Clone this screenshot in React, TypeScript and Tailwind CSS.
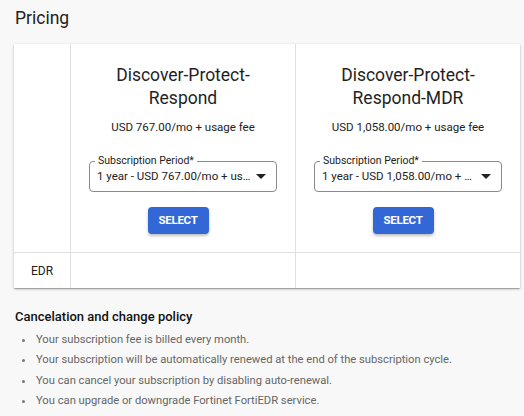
type Plan = {
  name: string;
  price: string;
  period: string;
};

const plans: Plan[] = [
  {
    name: "Discover-Protect-Respond",
    price: "USD 767.00/mo + usage fee",
    period: "1 year - USD 767.00/mo + usage fee",
  },
  {
    name: "Discover-Protect-Respond-MDR",
    price: "USD 1,058.00/mo + usage fee",
    period: "1 year - USD 1,058.00/mo + usage fee",
  },
];

const policy = [
  "Your subscription fee is billed every month.",
  "Your subscription will be automatically renewed at the end of the subscription cycle.",
  "You can cancel your subscription by disabling auto-renewal.",
  "You can upgrade or downgrade Fortinet FortiEDR service.",
];

const PeriodSelect = ({ value }: { value: string }) => {
  return (
    <div className="relative mx-[18px] h-[31px] rounded-[4px] border border-[#8a8a8a] flex items-center pl-[7px] pr-[10px]">
      <span className="absolute -top-[8px] left-[5px] bg-white px-[3px] text-[10.5px] leading-[14px] text-[#222]">
        Subscription Period*
      </span>
      <span className="flex-1 min-w-0 truncate text-[11.5px] text-[#222] pt-[1px]">{value}</span>
      <svg width="10" height="5" viewBox="0 0 10 5" className="ml-[5px] shrink-0">
        <path d="M0 0 L10 0 L5 5 Z" fill="#222" />
      </svg>
    </div>
  );
};

const PlanCell = ({ plan }: { plan: Plan }) => {
  return (
    <div className="flex-1 basis-0 min-w-0 border-l border-[#e0e0e0] flex flex-col items-stretch pt-[20px] pb-[18px]">
      <h2 className="px-[40px] text-center text-[17.5px] leading-[23px] text-[#1f1f1f]">
        {plan.name}
      </h2>
      <p className="mt-[9px] text-center text-[11.5px] leading-[16px] text-[#222]">{plan.price}</p>
      <div className="mt-[26px]">
        <PeriodSelect value={plan.period} />
      </div>
      <div className="mt-[15px] flex justify-center pr-[10px]">
        <button className="h-[27px] w-[61px] rounded-[4px] bg-[#3367d6] text-white text-[11.5px] font-bold tracking-tight shadow-[0_2px_3px_rgba(0,0,0,0.25)]">
          SELECT
        </button>
      </div>
    </div>
  );
};

export default function App() {
  return (
    <div
      className="w-[524px] h-[416px] overflow-hidden bg-[#f8f8f8] px-[14px] pt-[6px]"
      style={{ fontFamily: "Roboto, 'Liberation Sans', sans-serif" }}
    >
      <h1 className="pl-[1px] text-[17.5px] leading-[24px] text-[#222]">Pricing</h1>

      <div className="mt-[14px] w-[506px] bg-white shadow-[0_1px_3px_rgba(0,0,0,0.2),0_1px_1px_rgba(0,0,0,0.14),0_2px_1px_-1px_rgba(0,0,0,0.12)]">
        <div className="flex">
          <div className="w-[56px] shrink-0" />
          {plans.map((plan) => (
            <PlanCell key={plan.name} plan={plan} />
          ))}
        </div>
        <div className="flex h-[36px] border-t border-[#e0e0e0]">
          <div className="w-[56px] shrink-0 flex items-center justify-center text-[12px] text-[#222]">
            EDR
          </div>
          <div className="flex-1 basis-0 border-l border-[#e0e0e0]" />
          <div className="flex-1 basis-0 border-l border-[#e0e0e0]" />
        </div>
      </div>

      <h3 className="mt-[20px] pl-[1px] text-[13px] leading-[18px] font-medium text-[#111]">
        Cancelation and change policy
      </h3>
      <ul className="mt-[4px] pl-[8px] flex flex-col">
        {policy.map((line) => (
          <li key={line} className="flex items-center text-[11.2px] leading-[20.4px] text-[#666]">
            <span className="w-[3px] h-[3px] rounded-full bg-[#777] mr-[11px] shrink-0" />
            {line}
          </li>
        ))}
      </ul>
    </div>
  );
}
